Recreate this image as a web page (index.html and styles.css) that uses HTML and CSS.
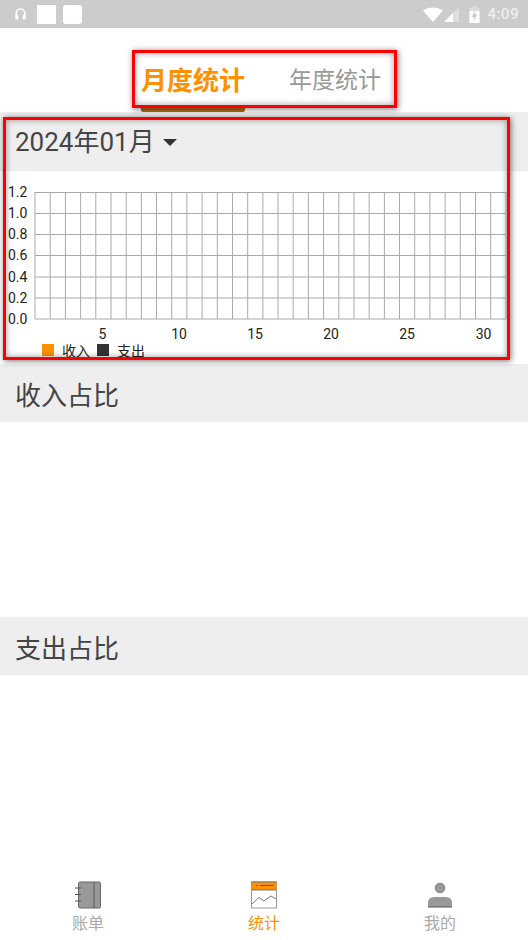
FILE: index.html
```html
<!DOCTYPE html>
<html lang="zh-CN">
<head>
  <meta charset="UTF-8" />
  <meta name="viewport" content="width=device-width, initial-scale=1.0"/>
  <title>统计</title>
  <link rel="stylesheet" href="styles.css">
</head>
<body>
  <div class="app">

    <!-- Status Bar -->
    <div class="status-bar">
      <div class="status-left">
        <svg class="icon-headset" width="11" height="12" viewBox="0 0 11 12">
          <path d="M1.200 7V5.300a4.300 4.300 0 0 1 8.600 0V7" fill="none" stroke="#fff" stroke-width="1.700"/>
          <rect x="0.300" y="6.500" width="3" height="5" rx="1.200" fill="#fff"/>
          <rect x="7.700" y="6.500" width="3" height="5" rx="1.200" fill="#fff"/>
        </svg>
        <div class="note-square"></div>
        <div class="note-square rounded"></div>
      </div>
      <div class="status-right">
        <svg width="37" height="17" viewBox="0 0 37 17">
          <path d="M0 4.500C6 .5 14 .5 20 4.500L10 16Z" fill="#fff"/>
          <path d="M21 16L36 1V16Z" fill="#dedede"/>
          <path d="M21 16L30 7V16Z" fill="#fff"/>
        </svg>
        <svg class="icon-battery" width="11" height="17" viewBox="0 0 11 17">
          <path d="M3.500 0H7.500V1.500H10.500V17H.5V1.500H3.500Z" fill="#dedede"/>
          <path d="M.5 5H10.500V17H.5Z" fill="#fff"/>
          <path d="M6.500 4L2.500 11H5L4 15.500L8.500 8.500H6Z" fill="#ccc"/>
        </svg>
        <span class="clock">4:09</span>
      </div>
    </div>

    <!-- Tabs -->
    <div class="tabs">
      <div class="tab active">月度统计</div>
      <div class="tab">年度统计</div>
    </div>

    <!-- Month Section -->
    <div class="section-head month-head">
      <span>2024年01月</span>
      <span class="caret"></span>
    </div>
    <div class="chart">
      <svg class="chart-plot" width="528" height="172" viewBox="0 0 528 172">
        <path class="grid-h" d="M35 22.500H506M35 43.500H506M35 64.500H506M35 85.500H506M35 107H506M35 128H506M35 149H506"/>
        <path class="grid-v" d="M35 22V149M50.200 22V149M65.400 22V149M80.600 22V149M95.800 22V149M111 22V149M126.200 22V149M141.400 22V149M156.500 22V149M171.700 22V149M186.900 22V149M202.100 22V149M217.300 22V149M232.500 22V149M247.700 22V149M262.900 22V149M278 22V149M293.200 22V149M308.400 22V149M323.600 22V149M338.800 22V149M354 22V149M369.200 22V149M384.400 22V149M399.500 22V149M414.700 22V149M429.900 22V149M445.100 22V149M460.300 22V149M475.500 22V149M490.700 22V149M506 22V149"/>
        <g class="axis-y">
          <text x="8" y="27">1.2</text>
          <text x="8" y="48">1.0</text>
          <text x="8" y="69">0.8</text>
          <text x="8" y="90">0.6</text>
          <text x="8" y="112">0.4</text>
          <text x="8" y="133">0.2</text>
          <text x="8" y="154">0.0</text>
        </g>
        <g class="axis-x">
          <text x="102.500" y="169">5</text>
          <text x="179" y="169">10</text>
          <text x="255" y="169">15</text>
          <text x="331" y="169">20</text>
          <text x="407" y="169">25</text>
          <text x="483.500" y="169">30</text>
        </g>
      </svg>
      <div class="legend">
        <span class="swatch income"></span><span class="legend-label">收入</span>
        <span class="swatch expense"></span><span class="legend-label">支出</span>
      </div>
    </div>

    <!-- Income Share -->
    <div class="section-head">收入占比</div>
    <div class="share-body"></div>

    <!-- Expense Share -->
    <div class="section-head">支出占比</div>
    <div class="share-fill"></div>

    <!-- Bottom Nav -->
    <div class="bottom-nav">
      <div class="nav-item">
        <svg width="26" height="28" viewBox="0 0 26 28">
          <rect x="3.500" y="1" width="22" height="26" rx="1.500" fill="#999" stroke="#666" stroke-width="1"/>
          <path d="M19 1V27" stroke="#555" stroke-width="1"/>
          <path d="M0 7H6M0 13.500H6M0 20H6" stroke="#555" stroke-width="1"/>
        </svg>
        <span>账单</span>
      </div>
      <div class="nav-item current">
        <svg width="26" height="28" viewBox="0 0 26 28">
          <rect x=".5" y="1" width="25" height="26" fill="#fff" stroke="#999" stroke-width="1"/>
          <rect x=".5" y="1" width="25" height="8" fill="#ff9000"/>
          <path d="M.5 1H25.500M.5 9H25.500" stroke="#777" stroke-width="1"/>
          <path d="M5 4.500H6.500M9 4.500H23" stroke="#555" stroke-width="1"/>
          <path d="M1 23L8 16.500L13 20L20 15L25 18" fill="none" stroke="#777" stroke-width="1"/>
        </svg>
        <span>统计</span>
      </div>
      <div class="nav-item">
        <svg width="26" height="28" viewBox="0 0 26 28">
          <circle cx="13" cy="7" r="4.800" fill="#999" stroke="#666" stroke-width=".7"/>
          <path d="M1 26V21.500C1 17 5 16 9 16H17C21 16 25 17 25 21.500V26Z" fill="#999"/>
          <path d="M1 26H25" stroke="#555" stroke-width="1"/>
        </svg>
        <span>我的</span>
      </div>
    </div>

    <!-- Highlight boxes drawn over the screen -->
    <div class="mark mark-tabs"></div>
    <div class="mark mark-chart"></div>
  </div>
</body>
</html>
```

FILE: styles.css
```css
html, body {
  margin: 0;
  background-color: white;
}
body {
  font-family: Roboto, "Noto Sans CJK SC", sans-serif;
}
.app {
  position: relative;
  width: 528px;
  height: 940px;
  display: flex;
  flex-direction: column;
  overflow: hidden;
}
.status-bar {
  height: 28px;
  flex: none;
  background-color: #ccc;
  display: flex;
  align-items: center;
  justify-content: space-between;
  padding: 0 9px 0 15px;
}
.status-left, .status-right {
  display: flex;
  align-items: center;
}
.note-square {
  width: 19px;
  height: 19px;
  background: white;
  margin-left: 11px;
}
.note-square.rounded {
  margin-left: 7px;
  border-radius: 3px;
}
.icon-battery {
  margin-left: 9px;
}
.clock {
  margin-left: 7px;
  color: #eee;
  font-size: 15.500px;
  font-weight: 500;
  letter-spacing: .3px;
}
.tabs {
  height: 84px;
  flex: none;
  display: flex;
  justify-content: center;
  align-items: center;
  gap: 44px;
  padding: 24px 6px 0 0;
  box-sizing: border-box;
}
.tab {
  font-size: 23px;
  color: #999;
  position: relative;
  line-height: 34px;
  top: -1px;
}
.tab.active {
  font-size: 26px;
  font-weight: bold;
  color: #ff9000;
}
.tab.active::after {
  content: "";
  position: absolute;
  left: 0;
  right: 0;
  top: 44px;
  height: 4px;
  border-radius: 0 0 2px 2px;
  background: #b36b10;
}
.section-head {
  height: 58px;
  flex: none;
  background-color: #eee;
  color: #444;
  font-size: 26px;
  display: flex;
  align-items: center;
  padding-left: 15px;
  box-sizing: border-box;
}
.month-head {
  height: 59px;
  padding-bottom: 4px;
}
.caret {
  width: 0;
  height: 0;
  margin: 6px 0 0 8px;
  border-left: 7.500px solid transparent;
  border-right: 7.500px solid transparent;
  border-top: 7.500px solid #333;
}
.chart {
  height: 193px;
  flex: none;
  background: white;
  position: relative;
}
.chart-plot {
  display: block;
  margin-top: -1px;
}
.grid-h, .grid-v {
  fill: none;
  stroke: #aaa;
  stroke-width: 1;
}
.chart text {
  font-family: Roboto, sans-serif;
  font-size: 14px;
  fill: #222;
}
.axis-x text {
  text-anchor: middle;
}
.legend {
  display: flex;
  align-items: center;
  height: 16px;
  padding: 0 0 0 42px;
  font-size: 14px;
  color: #222;
}
.swatch {
  width: 12px;
  height: 12px;
}
.swatch.income {
  background: #ff9000;
}
.swatch.expense {
  background: #333;
}
.legend-label {
  margin: 0 7px 0 8px;
}
.share-body {
  height: 195px;
  flex: none;
}
.share-fill {
  flex: 1;
}
.bottom-nav {
  height: 70px;
  flex: none;
  display: flex;
  background: white;
}
.nav-item {
  flex: 1;
  display: flex;
  flex-direction: column;
  align-items: center;
  padding-top: 11px;
  box-sizing: border-box;
  color: #aaa;
  font-size: 16px;
  line-height: 22px;
}
.nav-item svg {
  display: block;
  margin-bottom: 4px;
}
.nav-item.current {
  color: #ff9000;
}
.mark {
  position: absolute;
  box-sizing: border-box;
  border: 3px solid #f00;
  box-shadow: 1px 1px 6px rgba(0, 0, 0, .55), inset 0 0 6px rgba(0, 0, 0, .4);
}
.mark-tabs {
  left: 132px;
  top: 50px;
  width: 265px;
  height: 58px;
}
.mark-chart {
  left: 3px;
  top: 117px;
  width: 507px;
  height: 243px;
}
```
